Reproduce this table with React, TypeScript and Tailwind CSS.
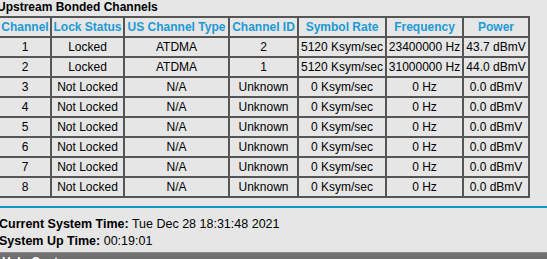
import React from "react";

const headers = [
  "Channel",
  "Lock Status",
  "US Channel Type",
  "Channel ID",
  "Symbol Rate",
  "Frequency",
  "Power",
];

const rows: string[][] = [
  ["1", "Locked", "ATDMA", "2", "5120 Ksym/sec", "23400000 Hz", "43.7 dBmV"],
  ["2", "Locked", "ATDMA", "1", "5120 Ksym/sec", "31000000 Hz", "44.0 dBmV"],
  ["3", "Not Locked", "N/A", "Unknown", "0 Ksym/sec", "0 Hz", "0.0 dBmV"],
  ["4", "Not Locked", "N/A", "Unknown", "0 Ksym/sec", "0 Hz", "0.0 dBmV"],
  ["5", "Not Locked", "N/A", "Unknown", "0 Ksym/sec", "0 Hz", "0.0 dBmV"],
  ["6", "Not Locked", "N/A", "Unknown", "0 Ksym/sec", "0 Hz", "0.0 dBmV"],
  ["7", "Not Locked", "N/A", "Unknown", "0 Ksym/sec", "0 Hz", "0.0 dBmV"],
  ["8", "Not Locked", "N/A", "Unknown", "0 Ksym/sec", "0 Hz", "0.0 dBmV"],
];

const cell =
  "h-5 flex items-center justify-center whitespace-nowrap border-r-2 border-b-2 border-[#555555] leading-[18px]";

export default function App() {
  return (
    <div className="w-[547px] h-[259px] overflow-hidden bg-[#e6e6e6] text-[12px] text-black font-['Liberation_Sans',Arial,sans-serif]">
      {/* upstream table */}
      <div className="-ml-[3px] h-[14px] leading-[14px] font-bold whitespace-nowrap">
        Upstream Bonded Channels
      </div>
      <div className="mt-[2px] -ml-[2px] w-max grid grid-cols-[52px_73px_105px_69px_88px_77px_66px] border-l-2 border-t-2 border-[#555555]">
        {headers.map((h) => (
          <div key={h} className={cell + " font-bold text-[#1b9ad6]"}>
            {h}
          </div>
        ))}
        {rows.map((r, i) =>
          r.map((v, j) => (
            <div key={i + "-" + j} className={cell}>
              {v}
            </div>
          ))
        )}
      </div>

      <div className="mt-2 h-[2px] w-full bg-[#1195c9]" />

      {/* system info */}
      <div className="mt-2 -ml-px text-[12.5px] leading-[17px] whitespace-nowrap">
        <div>
          <span className="font-bold">Current System Time:</span> Tue Dec 28
          18:31:48 2021
        </div>
        <div>
          <span className="font-bold">System Up Time:</span> 00:19:01
        </div>
      </div>

      {/* footer bar, mostly cut off */}
      <div className="mt-[2px] h-[30px] border-t border-[#8a8a8a] bg-linear-to-b from-[#737373] to-[#5a5a5a] pt-[2px] flex items-start justify-between pl-[2px] pr-[92px] text-white font-bold leading-[14px]">
        <span>Help Center</span>
        <span>⌂</span>
      </div>
    </div>
  );
}
